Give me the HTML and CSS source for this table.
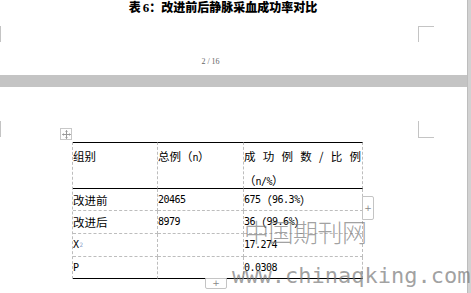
FILE: index.html
```html
<!DOCTYPE html>
<html lang="zh-CN">
<head>
<meta charset="utf-8">
<title>表6</title>
<link rel="stylesheet" href="styles.css">
</head>
<body>
<div class="viewer">
  <div class="page page1">
    <div class="title">表<span class="num">6</span>：改进前后静脉采血成功率对比</div>
    <div class="pageno">2 / 16</div>
    <span class="mark mark-l1"></span>
    <span class="mark mark-r1"></span>
  </div>
  <div class="gap"></div>
  <div class="page page2">
    <span class="mark mark-l2"></span>
    <span class="mark mark-r2"></span>
    <span class="move">
      <svg width="9" height="9" viewBox="0 0 9 9"><path d="M4.5 0.5v8M0.5 4.5h8M3.5 1.5l1-1 1 1M3.5 7.5l1 1 1-1M1.5 3.5l-1 1 1 1M7.5 3.5l1 1-1 1" fill="none" stroke="#9a9a9a" stroke-width="1"/></svg>
    </span>
    <div class="tbl">
      <div class="c h">组别</div>
      <div class="c h">总例（<span class="lat">n</span>）</div>
      <div class="c h h3">
        <div class="just"><span>成</span><span>功</span><span>例</span><span>数</span><span>/</span><span>比</span><span>例</span></div>
        <div>（<span class="lat">n/%</span>）</div>
      </div>
      <div class="c">改进前</div>
      <div class="c lat">20465</div>
      <div class="c"><span class="lat">675</span>（<span class="lat">96.3%</span>）</div>
      <div class="c">改进后</div>
      <div class="c lat">8979</div>
      <div class="c"><span class="lat">36</span>（<span class="lat">99.6%</span>）</div>
      <div class="c lat">X<sup class="sq">2</sup></div>
      <div class="c"></div>
      <div class="c lat">17.274</div>
      <div class="c lat last">P</div>
      <div class="c last"></div>
      <div class="c lat last">0.0308</div>
    </div>
    <span class="btn btn-r">+</span>
    <span class="btn btn-b">+</span>
    <span class="wm wm-cn">中国期刊网</span>
    <span class="wm wm-en">www.chinaqking.com</span>
  </div>
</div>
</body>
</html>
```

FILE: styles.css
```css
* { box-sizing: border-box; }
html, body {
  margin: 0;
  padding: 0;
  width: 471px;
  height: 293px;
  overflow: hidden;
  background: #d2d2d2;
}
.viewer {
  width: 468px;
  display: flex;
  flex-direction: column;
  border-right: 1px solid #bdbdbd;
}
.page {
  background: #fff;
  position: relative;
}
.page1 {
  height: 75px;
  display: flex;
  flex-direction: column;
}
.title {
  font-family: "Noto Sans CJK SC", sans-serif;
  font-weight: 900;
  font-size: 12px;
  line-height: 14px;
  text-align: center;
  padding-right: 21px;
  color: #000;
}
.title .num {
  font-family: "Liberation Serif", serif;
  font-weight: 700;
  font-size: 13px;
  padding-left: 2px;
}
.pageno {
  margin-top: 41px;
  font-family: "Liberation Serif", serif;
  font-size: 8px;
  line-height: 12px;
  color: #666;
  text-align: center;
  padding-right: 46px;
}
.gap {
  height: 12px;
  background: #c4c4c4;
}
.page2 {
  height: 206px;
  padding-top: 55px;
  padding-left: 72px;
}
.mark { position: absolute; border-color: #c4c4c4; border-style: solid; border-width: 0; }
.mark-l1 { left: 0; top: 26px; width: 1px; height: 16px; border-left-width: 1px; }
.mark-r1 { left: 418px; top: 26px; width: 16px; height: 16px; border-left-width: 1px; border-top-width: 1px; }
.mark-l2 { left: 0; top: 34px; width: 1px; height: 16px; border-left-width: 1px; }
.mark-r2 { left: 418px; top: 34px; width: 16px; height: 17px; border-left-width: 1px; border-bottom-width: 1px; }

.move {
  position: absolute;
  left: 60px;
  top: 41px;
  width: 12px;
  height: 12px;
  border: 1px solid #c8c8c8;
  background: #fff;
  display: flex;
  align-items: center;
  justify-content: center;
}
.tbl {
  display: grid;
  grid-template-columns: 85px 86px 119px;
  grid-template-rows: 47px 22px 23px 23px 22px;
  width: 291px;
  border-left: 1px dashed #bdbdbd;
  font-family: "Noto Sans CJK SC", sans-serif;
  font-size: 11.5px;
  color: #000;
}
.c {
  border-right: 1px dashed #bdbdbd;
  border-bottom: 1px dashed #bdbdbd;
  display: flex;
  align-items: center;
  line-height: 14px;
  white-space: nowrap;
}
.c.h {
  border-top: 1px solid #000;
  border-bottom: 1px solid #000;
  display: block;
  line-height: 24px;
  padding-top: 1px;
}
.h3 { padding-right: 1px; }
.just {
  display: flex;
  justify-content: space-between;
}
.c.last { border-bottom: 1px solid #000; }
.lat {
  font-family: "DejaVu Sans Mono", monospace;
  font-size: 10px;
  letter-spacing: -0.5px;
}
.sq {
  font-size: 6px;
  color: #8aa0c8;
  vertical-align: 5px;
  line-height: 0;
  margin-left: 1px;
}
.btn {
  position: absolute;
  background: #fff;
  border: 1px solid #c4c4c4;
  color: #888;
  font-family: "DejaVu Sans", sans-serif;
  font-size: 9px;
  line-height: 1;
  display: flex;
  align-items: center;
  justify-content: center;
}
.btn-r {
  left: 362px;
  top: 109px;
  width: 12px;
  height: 24px;
  border-radius: 0 2px 2px 0;
}
.btn-b {
  left: 205px;
  top: 191px;
  width: 22px;
  height: 11px;
  border-radius: 0 0 2px 2px;
}
.wm {
  position: absolute;
  white-space: nowrap;
  color: rgba(120, 120, 120, 0.7);
}
.wm-cn {
  left: 244px;
  top: 131px;
  font-family: "Noto Sans CJK SC", sans-serif;
  font-weight: 300;
  font-size: 25px;
  line-height: 26px;
  letter-spacing: -0.5px;
}
.wm-en {
  left: 232px;
  top: 178px;
  font-family: "DejaVu Sans Mono", monospace;
  font-size: 22px;
  line-height: 22px;
}
```
